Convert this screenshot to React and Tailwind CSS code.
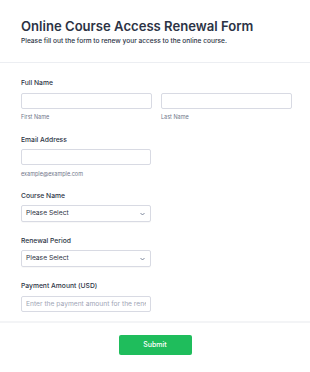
export default function App() {
  const inputCls =
    "block h-[16px] w-[130px] rounded-[2px] border border-[#d8dae3] bg-white";
  const labelCls = "text-[6.75px] font-medium text-[#2c3345] leading-[10px]";
  const subCls = "text-[5.5px] text-[#6f7689] leading-[8px]";

  return (
    <div className="w-[310px] h-[372px] bg-white font-['Inter',sans-serif] overflow-hidden">
      <div className="px-[21px] pt-[18px] pb-[16px] border-b border-[#eceef2]">
        <h1 className="text-[13.1px] font-semibold text-[#2c3345] leading-[16px] whitespace-nowrap">
          Online Course Access Renewal Form
        </h1>
        <p className="mt-[2px] text-[6.6px] font-medium text-[#2c3345] leading-[10px] whitespace-nowrap">
          Please fill out the form to renew your access to the online course.
        </p>
      </div>

      <div className="px-[21px] pt-[15px]">
        <div className={labelCls}>Full Name</div>
        <div className="mt-[5px] flex gap-[9px]">
          <div>
            <input className={inputCls + " w-[131px]"} />
            <div className={subCls + " mt-[4px]"}>First Name</div>
          </div>
          <div>
            <input className={inputCls + " w-[131px]"} />
            <div className={subCls + " mt-[4px]"}>Last Name</div>
          </div>
        </div>

        <div className={labelCls + " mt-[14px]"}>Email Address</div>
        <input className={inputCls + " mt-[4px]"} />
        <div className={subCls + " mt-[5px] text-[5.2px]"}>example@example.com</div>

        <div className={labelCls + " mt-[13px]"}>Course Name</div>
        <Select />

        <div className={labelCls + " mt-[14px]"}>Renewal Period</div>
        <Select />

        <div className={labelCls + " mt-[14px]"}>Payment Amount (USD)</div>
        <input
          className={inputCls + " mt-[5px] px-[4px] text-[6.7px] text-[#2c3345] placeholder:text-[#a0a5b5]"}
          placeholder="Enter the payment amount for the renewal"
        />
      </div>

      <div className="mt-[9px] h-[2px] bg-[#f3f4f6]" />

      <div className="flex justify-center pt-[12px]">
        <button className="h-[20px] w-[73px] rounded-[2px] bg-[#1fbd5c] text-[7px] font-medium text-white">
          Submit
        </button>
      </div>
    </div>
  );
}

function Select() {
  return (
    <div className="mt-[4px] flex h-[17px] w-[130px] items-center justify-between rounded-[2px] border border-[#d8dae3] bg-white px-[4px] shadow-[0_1px_1px_rgba(0,0,0,0.03)]">
      <span className="text-[6.7px] text-[#2c3345]">Please Select</span>
      <svg width="5" height="4" viewBox="0 0 10 6" className="mr-[1px]">
        <path d="M1 1l4 4 4-4" fill="none" stroke="#57647e" strokeWidth="1.5" />
      </svg>
    </div>
  );
}
